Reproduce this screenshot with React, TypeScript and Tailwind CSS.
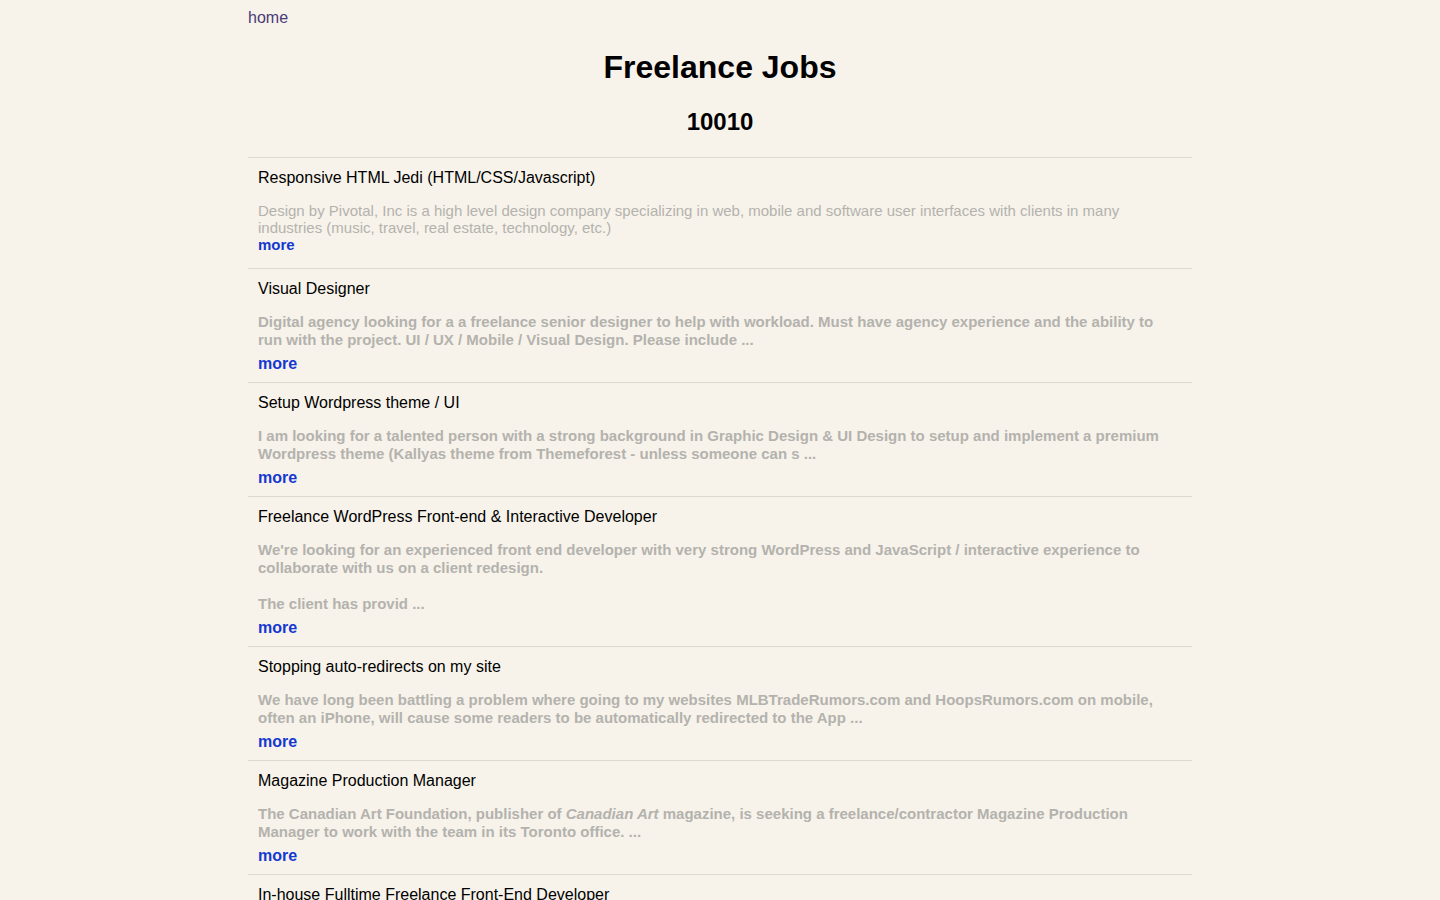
import React from "react";

interface Job {
  title: string;
  paras: React.ReactNode[];
  bold?: boolean;
}

const jobs: Job[] = [
  {
    title: "Responsive HTML Jedi (HTML/CSS/Javascript)",
    paras: [
      "Design by Pivotal, Inc is a high level design company specializing in web, mobile and software user interfaces with clients in many industries (music, travel, real estate, technology, etc.)",
    ],
  },
  {
    title: "Visual Designer",
    bold: true,
    paras: [
      "Digital agency looking for a a freelance senior designer to help with workload. Must have agency experience and the ability to run with the project. UI / UX / Mobile / Visual Design. Please include ...",
    ],
  },
  {
    title: "Setup Wordpress theme / UI",
    bold: true,
    paras: [
      "I am looking for a talented person with a strong background in Graphic Design & UI Design to setup and implement a premium Wordpress theme (Kallyas theme from Themeforest - unless someone can s ...",
    ],
  },
  {
    title: "Freelance WordPress Front-end & Interactive Developer",
    bold: true,
    paras: [
      "We're looking for an experienced front end developer with very strong WordPress and JavaScript / interactive experience to collaborate with us on a client redesign.",
      "The client has provid ...",
    ],
  },
  {
    title: "Stopping auto-redirects on my site",
    bold: true,
    paras: [
      "We have long been battling a problem where going to my websites MLBTradeRumors.com and HoopsRumors.com on mobile, often an iPhone, will cause some readers to be automatically redirected to the App ...",
    ],
  },
  {
    title: "Magazine Production Manager",
    bold: true,
    paras: [
      <>
        The Canadian Art Foundation, publisher of <em>Canadian Art</em> magazine, is seeking a freelance/contractor Magazine Production Manager to work with the team in its Toronto office. ...
      </>,
    ],
  },
  {
    title: "In-house Fulltime Freelance Front-End Developer",
    bold: true,
    paras: [
      "We are looking for a talented front-end developer to join our in-house team on a fulltime freelance basis. You will work closely with our designers and developers on ...",
    ],
  },
];

const JobItem: React.FC<{ job: Job }> = ({ job }) => (
  <div
    className={
      job.bold
        ? "border-t border-[#dcd9d2] px-[10px] pt-[10px] pb-[9px]"
        : "border-t border-[#dcd9d2] px-[10px] pt-[10px] pb-[10px]"
    }
  >
    <div className="text-[16px] leading-[20px] text-black">{job.title}</div>
    {job.bold ? (
      <div className="mt-[14px] pr-[20px] text-[15px] leading-[18px] font-bold text-[#b4b2ae]">
        {job.paras.map((p, i) => (
          <p key={i} className={i > 0 ? "mt-[18px]" : ""}>
            {p}
          </p>
        ))}
      </div>
    ) : (
      <div className="mt-[14px] text-[15px] leading-[17px] text-[#b4b2ae]">
        {job.paras.map((p, i) => (
          <p key={i}>{p}</p>
        ))}
      </div>
    )}
    <a
      href="#"
      className={
        job.bold
          ? "mt-[6px] block text-[16px] leading-[18px] font-bold text-[#1438d0]"
          : "block pb-[4px] text-[15px] leading-[18px] font-bold text-[#1438d0]"
      }
    >
      more
    </a>
  </div>
);

export default function App() {
  return (
    <div className="min-h-screen bg-[#f7f3ea] font-['Liberation_Sans',Arial,sans-serif]">
      <div className="mx-auto w-[944px]">
        <div className="pt-[6px]">
          <a href="#" className="text-[16px] leading-[20px] text-[#4a3a78]">
            home
          </a>
        </div>
        <h1 className="mt-[17px] text-center text-[32px] leading-[40px] font-bold text-black">
          Freelance Jobs
        </h1>
        <h2 className="mt-[20px] text-center text-[24px] leading-[30px] font-bold text-black">
          10010
        </h2>
        <div className="mt-[20px]">
          {jobs.map((job, i) => (
            <JobItem key={i} job={job} />
          ))}
        </div>
      </div>
    </div>
  );
}
